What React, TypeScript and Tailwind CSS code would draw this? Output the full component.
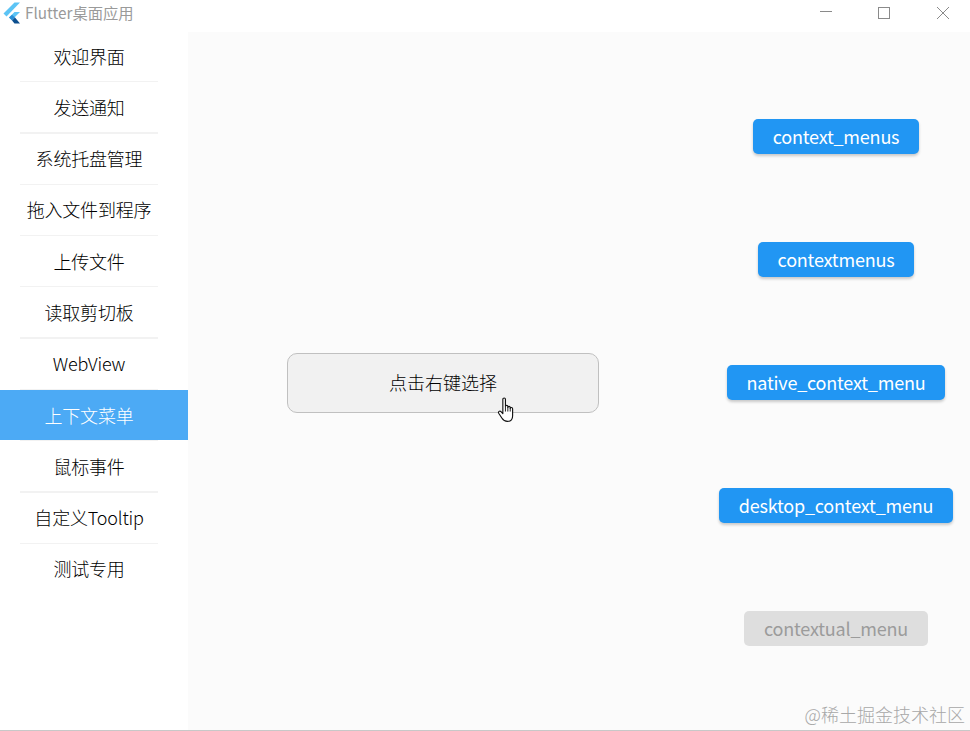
const FONT = "font-['Noto_Sans_CJK_SC','Noto_Sans',sans-serif]";

const MENU_ITEMS = [
	"欢迎界面",
	"发送通知",
	"系统托盘管理",
	"拖入文件到程序",
	"上传文件",
	"读取剪切板",
	"WebView",
	"上下文菜单",
	"鼠标事件",
	"自定义Tooltip",
	"测试专用",
];

const ACTIONS = [
	"context_menus",
	"contextmenus",
	"native_context_menu",
	"desktop_context_menu",
];

function FlutterLogo() {
	return (
		<svg width="18" height="22" viewBox="0 0 18 22" aria-hidden="true">
			<path d="M1.5 11.5 12.5 0.5H18L4.5 14.5Z" fill="#5cc4f5" />
			<path d="M7 15.5 12.5 10H18L10 18Z" fill="#5cc4f5" />
			<path d="M7 15.5 10 12.7 13 15.5 10 18.5Z" fill="#2a8fd6" />
			<path d="M10 18.5 13 15.5 18 21.5H12.5Z" fill="#0d4f8f" />
		</svg>
	);
}

function WindowControls() {
	return (
		<div className="flex items-center text-[#8a8a8a]">
			<svg width="14" height="14" viewBox="0 0 14 14" className="mr-[44px] mb-[2px]" aria-hidden="true">
				<path d="M1 6.5H13" stroke="currentColor" strokeWidth="1" />
			</svg>
			<svg width="14" height="14" viewBox="0 0 14 14" className="mr-[45px]" aria-hidden="true">
				<rect x="1.5" y="1.5" width="11" height="11" fill="none" stroke="currentColor" strokeWidth="1" />
			</svg>
			<svg width="14" height="14" viewBox="0 0 14 14" className="mr-[20px]" aria-hidden="true">
				<path d="M1 1 13 13M13 1 1 13" stroke="currentColor" strokeWidth="1" />
			</svg>
		</div>
	);
}

function HandCursor() {
	return (
		<svg
			width="20"
			height="27"
			viewBox="0 0 18 26"
			className="absolute left-[209px] top-[43px]"
			aria-hidden="true"
		>
			<path
				d="M5 2.2c0-1.6 2.5-1.6 2.5 0V9c0-1.3 2.3-1.3 2.3 0v1c0-1.3 2.3-1.3 2.3 0v1c0-1.2 2.3-1.2 2.3 0.2V18c0 3.3-2 5.5-5 5.5-2.6 0-4-1-5.2-3L1 15.6c-.8-1.5 1-2.7 2.2-1.5L5 16Z"
				fill="#fff"
				stroke="#111"
				strokeWidth="1.1"
				strokeLinejoin="round"
			/>
			<path d="M7.5 9v5M9.8 10v4M12.1 11v3" stroke="#111" strokeWidth="0.9" fill="none" />
		</svg>
	);
}

export default function App() {
	return (
		<div className={`relative flex h-[731px] w-[970px] flex-col overflow-hidden bg-white ${FONT}`}>
			<header className="flex h-[32px] shrink-0 items-center justify-between pb-[7px]">
				<div className="flex items-center pl-[2px]">
					<FlutterLogo />
					<span className="ml-[5px] text-[15.3px] text-[#9a9a9a]">Flutter桌面应用</span>
				</div>
				<WindowControls />
			</header>

			<div className="flex min-h-0 flex-1 border-b border-[#c8c8c8]">
				<nav className="-mt-px w-[188px] shrink-0 bg-white">
					{MENU_ITEMS.map((item, index) => {
						const selected = item === "上下文菜单";
						return (
							<div key={item}>
								<div
									className={`flex h-[50px] items-center justify-center pr-[10px] text-[18px] font-light tracking-[-0.2px] ${
										selected ? "bg-[#4caaf5] text-white" : "text-black"
									}`}
								>
									{item}
								</div>
								{index < MENU_ITEMS.length - 1 ? (
									<div className="ml-[20px] mr-[30px] h-[1.3px] bg-[#f2f2f2]" />
								) : null}
							</div>
						);
					})}
				</nav>

				<main className="flex min-w-0 flex-1 items-center bg-[#fbfbfb] pt-[3px]">
					<div className="flex w-[510px] justify-center">
						<div className="relative flex h-[60px] w-[312px] items-center justify-center rounded-[10px] border-[1.5px] border-[#c0c0c0] bg-[#f1f1f1] text-[18px] font-light text-black">
							点击右键选择
							<HandCursor />
						</div>
					</div>

					<div className="flex flex-1 flex-col items-center gap-[88px] pl-1">
						{ACTIONS.map((label) => (
							<button
								key={label}
								type="button"
								className="flex h-[35px] items-center rounded-[5px] bg-[#2196f3] px-[20px] text-[18px] tracking-[-0.2px] text-white shadow-[0_2px_3px_rgba(0,0,0,0.2)]"
							>
								{label}
							</button>
						))}
						<button
							type="button"
							className="flex h-[35px] items-center rounded-[5px] bg-[#dedede] px-[20px] text-[18px] tracking-[-0.2px] text-[#9b9b9b]"
						>
							contextual_menu
						</button>
					</div>
				</main>
			</div>

			<span className="absolute right-[5px] bottom-[3px] text-[18px] font-light text-[#a8a8a8]">
				@稀土掘金技术社区
			</span>
		</div>
	);
}
